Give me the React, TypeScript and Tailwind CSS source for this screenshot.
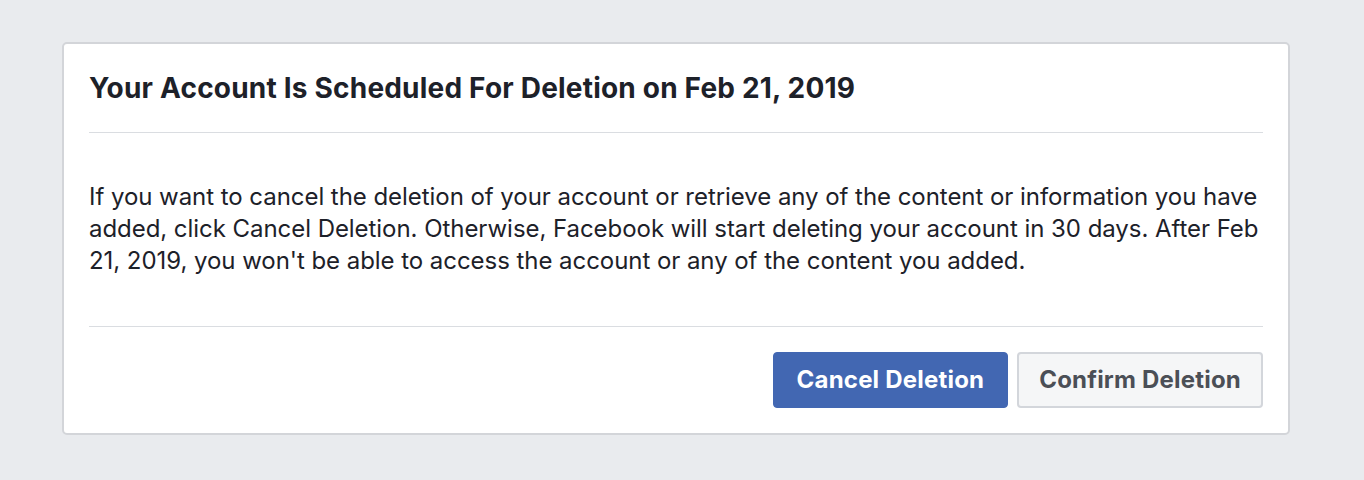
export default function App() {
  return (
    <div className="min-h-screen bg-[#e9ebee] pt-[42px] pl-[62px] pr-[74px] font-['Inter','Liberation_Sans',sans-serif] text-[#1d2129]">
      <div className="rounded-[5px] border-2 border-[#d3d5d9] bg-white px-[25px]">
        {/* Header */}
        <div className="border-b border-[#dadde1] pt-[27px] pb-[27px]">
          <h2 className="text-[28px] font-bold leading-[34px] tracking-[0.2px]">
            Your Account Is Scheduled For Deletion on Feb 21, 2019
          </h2>
        </div>

        {/* Body */}
        <div className="border-b border-[#dadde1] pt-[48px] pb-[49px]">
          <p className="text-[24px] leading-[32px] tracking-[-0.05px]">
            If you want to cancel the deletion of your account or retrieve any of the content or information you have
            added, click Cancel Deletion. Otherwise, Facebook will start deleting your account in 30 days. After Feb
            21, 2019, you won't be able to access the account or any of the content you added.
          </p>
        </div>

        {/* Footer */}
        <div className="flex justify-end gap-[9px] pt-[25px] pb-[25px]">
          <button className="h-[56px] rounded-[4px] border border-[#4267b2] bg-[#4267b2] px-[23px] text-[24px] font-bold tracking-[0.2px] text-white">
            Cancel Deletion
          </button>
          <button className="h-[56px] rounded-[4px] border-2 border-[#d3d6db] bg-[#f5f6f7] px-[20px] text-[24px] font-bold tracking-[0.2px] text-[#4b4f56]">
            Confirm Deletion
          </button>
        </div>
      </div>
    </div>
  );
}
